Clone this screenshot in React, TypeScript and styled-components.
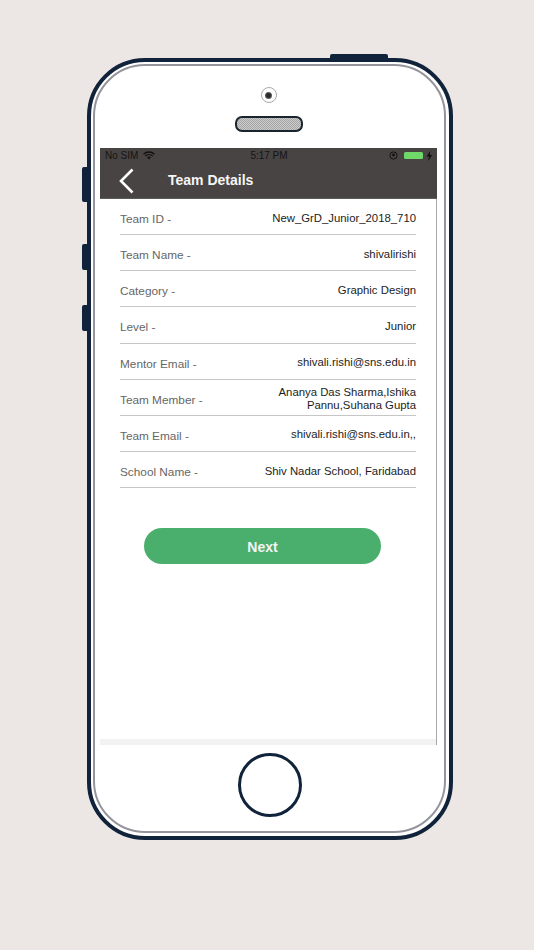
import { createGlobalStyle } from "styled-components";
import styled from "styled-components";

const GlobalStyle = createGlobalStyle`
  html, body {
    margin: 0;
    padding: 0;
    background: #ece6e4;
    font-family: "Liberation Sans", Arial, sans-serif;
  }
`

const Page = styled.div`
  width: 534px;
  height: 950px;
  padding: 58px 0 0 87px;
  box-sizing: border-box;
  overflow: hidden;
`
const Phone = styled.div`
  position: relative;
  box-sizing: border-box;
  width: 366px;
  height: 782px;
  border: 4px solid #10233a;
  border-radius: 58px;
  background: #fff;
  padding: 2px 3px 3px 2px;
`
const SideButton = styled.span<{ $top: number; $height: number }>`
  position: absolute;
  left: -9px;
  top: ${(p) => p.$top}px;
  width: 5px;
  height: ${(p) => p.$height}px;
  background: #10233a;
  border-radius: 2px 0 0 2px;
`
const TopButton = styled.span`
  position: absolute;
  left: 239px;
  top: -8px;
  width: 58px;
  height: 4px;
  background: #10233a;
  border-radius: 2px 2px 0 0;
`
const Ring = styled.div`
  box-sizing: border-box;
  height: 100%;
  border: 2px solid #94949c;
  border-radius: 52px;
  display: flex;
  flex-direction: column;
  align-items: center;
  padding: 21px 7px 0 5px;
`
const Camera = styled.div`
  box-sizing: border-box;
  width: 16px;
  height: 16px;
  border-radius: 50%;
  border: 1.5px solid #a9a9a9;
  display: flex;
  align-items: center;
  justify-content: center;
  &::after {
    content: "";
    width: 7px;
    height: 7px;
    border-radius: 50%;
    background: radial-gradient(circle, #26282c 35%, #9a9a9a 100%);
  }
`
const Speaker = styled.div`
  box-sizing: border-box;
  width: 68px;
  height: 16px;
  margin-top: 13px;
  margin-left: 1px;
  border: 2px solid #1a242c;
  border-radius: 7px;
  background: repeating-conic-gradient(#a4a4a4 0 25%, #cdcdcd 0 50%) 0 0 / 2px 2px;
`
const Screen = styled.div`
  box-sizing: border-box;
  width: 337px;
  height: 597px;
  margin-top: 16px;
  border-right: 1px solid #a8a8a8;
  display: flex;
  flex-direction: column;
`
const Header = styled.div`
  height: 51px;
  flex-shrink: 0;
  background: #484444;
  border-bottom: 1px solid #5c5c5c;
  box-sizing: border-box;
  margin-right: -1px;
`
const StatusBar = styled.div`
  height: 15px;
  display: flex;
  align-items: center;
  justify-content: space-between;
  padding: 0 4px 0 5px;
  font-size: 10px;
  color: #141313;
`
const StatusSide = styled.div`
  width: 90px;
  display: flex;
  align-items: center;
  gap: 5px;
`
const StatusRight = styled(StatusSide)`
  justify-content: flex-end;
  gap: 3px;
`
const Battery = styled.span`
  width: 19px;
  height: 7px;
  margin-left: 3px;
  border-radius: 1.5px;
  background: #6fd868;
`
const NavBar = styled.div`
  height: 35px;
  display: flex;
  align-items: center;
  padding-left: 19px;
`
const Title = styled.h1`
  margin: 0 0 1px 34px;
  font-size: 14px;
  font-weight: 700;
  color: #f6f6f6;
`
const Details = styled.div`
  padding: 0 20px;
`
const Row = styled.div`
  box-sizing: border-box;
  height: 36.15px;
  display: flex;
  align-items: center;
  justify-content: space-between;
  border-bottom: 1px solid #c6c6c6;
`
const Label = styled.span`
  font-size: 11.8px;
  color: #666;
  padding-top: 5px;
  white-space: nowrap;
`
const Value = styled.span`
  font-size: 11.35px;
  line-height: 13px;
  color: #1c1c1c;
  text-align: right;
  width: 150px;
  flex-grow: 1;
  padding-top: 3px;
`
const NextButton = styled.button`
  display: block;
  width: 237px;
  height: 36px;
  margin: 40px 0 0 44px;
  padding: 2px 0 0;
  border: none;
  border-radius: 18px;
  background: #4aae6d;
  color: #f4f4f4;
  font-family: inherit;
  font-size: 14px;
  font-weight: 700;
`
const Filler = styled.div`
  flex-grow: 1;
`
const FooterStrip = styled.div`
  height: 6px;
  background: #f2f2f2;
`
const HomeButton = styled.div`
  box-sizing: border-box;
  width: 64px;
  height: 64px;
  margin-top: 8px;
  margin-left: 3px;
  border: 3px solid #10233a;
  border-radius: 50%;
`

const rows = [
  { label: "Team ID -", value: "New_GrD_Junior_2018_710" },
  { label: "Team Name -", value: "shivalirishi" },
  { label: "Category -", value: "Graphic Design" },
  { label: "Level -", value: "Junior" },
  { label: "Mentor Email -", value: "shivali.rishi@sns.edu.in" },
  { label: "Team Member -", value: "Ananya Das Sharma,Ishika Pannu,Suhana Gupta" },
  { label: "Team Email -", value: "shivali.rishi@sns.edu.in,," },
  { label: "School Name -", value: "Shiv Nadar School, Faridabad" },
]

function App() {
  return (
    <Page>
      <GlobalStyle />
      <Phone>
        <TopButton />
        <SideButton $top={105} $height={35} />
        <SideButton $top={182} $height={26} />
        <SideButton $top={243} $height={26} />
        <Ring>
          <Camera />
          <Speaker />
          <Screen>
            <Header>
              <StatusBar>
                <StatusSide>
                  No SIM
                  <svg width="12" height="9" viewBox="0 0 12 9">
                    <path d="M.5 3.2a8 8 0 0 1 11 0M2.3 5a5.4 5.4 0 0 1 7.4 0" fill="none" stroke="#111" strokeWidth="1.3" />
                    <path d="M4 6.3a3 3 0 0 1 4 0L6 8.6z" fill="#111" />
                  </svg>
                </StatusSide>
                <span>5:17 PM</span>
                <StatusRight>
                  <svg width="9" height="9" viewBox="0 0 9 9">
                    <circle cx="4.5" cy="4.5" r="3.6" fill="none" stroke="#111" strokeWidth="1" />
                    <circle cx="4.5" cy="4" r="1.4" fill="#111" />
                  </svg>
                  <Battery />
                  <svg width="7" height="10" viewBox="0 0 6 9">
                    <path d="M3.6 0 .4 5h2L1.8 9l3.6-5.4h-2z" fill="#111" />
                  </svg>
                </StatusRight>
              </StatusBar>
              <NavBar>
                <svg width="15" height="26" viewBox="0 0 15 26">
                  <path d="M13.5 1.5 2 13l11.5 11.5" fill="none" stroke="#fff" strokeWidth="2.6" />
                </svg>
                <Title>Team Details</Title>
              </NavBar>
            </Header>
            <Details>
              {rows.map((row) => (
                <Row key={row.label}>
                  <Label>{row.label}</Label>
                  <Value>{row.value}</Value>
                </Row>
              ))}
            </Details>
            <NextButton>Next</NextButton>
            <Filler />
            <FooterStrip />
          </Screen>
          <HomeButton />
        </Ring>
      </Phone>
    </Page>
  )
}

export default App
